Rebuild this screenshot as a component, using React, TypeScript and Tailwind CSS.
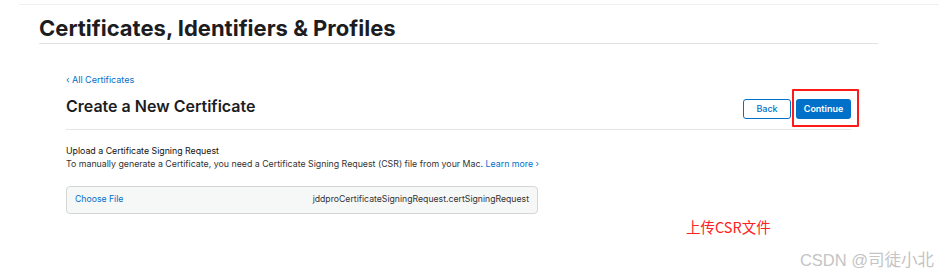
export default function App() {
  return (
    <div className="relative w-[939px] h-[277px] overflow-hidden bg-white font-['Inter','Noto_Sans',sans-serif] text-[#1d1d1f]">
      <div className="mt-[4px] ml-[19px] h-px bg-[#f0f0f0]" />

      <div className="ml-[39px] w-[839px] mt-[9px] pb-px border-b border-[#e2e2e2]">
        <h1 className="text-[22px] leading-[28px] font-bold">
          Certificates, Identifiers &amp; Profiles
        </h1>
      </div>

      <div className="ml-[66px] w-[785px]">
        <a className="block mt-[29px] text-[9px] leading-[14px] text-[#0070c9]">‹ All Certificates</a>

        <div className="flex items-start justify-between mt-[7px] pb-[10px] border-b border-[#e5e5e5]">
          <h2 className="text-[16px] leading-[22px] font-semibold mt-px">Create a New Certificate</h2>
          <div className="flex items-start gap-[5px] mt-[5px]">
            <button className="w-[48px] h-[20px] rounded-[3px] border border-[#0070c9] text-[#0070c9] text-[9px] font-medium bg-white">
              Back
            </button>
            <div className="relative flex">
              <button className="w-[55px] h-[20px] rounded-[3px] bg-[#0070c9] text-white text-[9px] font-semibold">
                Continue
              </button>
              <div className="absolute left-[-4px] top-[-10px] w-[67px] h-[38px] border-2 border-[#ff1a1a] rounded-[1px]" />
            </div>
          </div>
        </div>

        <div className="mt-[14px] text-[8.8px] leading-[13px]">
          <p className="text-[#111]">Upload a Certificate Signing Request</p>
          <p className="text-[#333]">
            To manually generate a Certificate, you need a Certificate Signing Request (CSR) file from your Mac.{" "}
            <span className="text-[#0070c9]">Learn more ›</span>
          </p>
        </div>

        <div className="mt-[16px] w-[472px] h-[28px] flex items-center justify-between px-[8px] rounded-[4px] border border-[#d6d6d6] bg-[#f6f7f7] text-[8.7px]">
          <span className="text-[#0070c9]">Choose File</span>
          <span className="text-[#333]">jddproCertificateSigningRequest.certSigningRequest</span>
        </div>
      </div>

      <div className="absolute left-[686px] top-[220px] text-[14.5px] leading-none text-[#ff2020] font-['Noto_Sans_CJK_SC',sans-serif]">
        上传CSR文件
      </div>
      <div className="absolute right-[5px] top-[252px] text-[16.5px] leading-none text-[#c4c4c4] font-['Liberation_Sans','Noto_Sans_CJK_SC',sans-serif]">
        CSDN @司徒小北
      </div>
    </div>
  )
}
